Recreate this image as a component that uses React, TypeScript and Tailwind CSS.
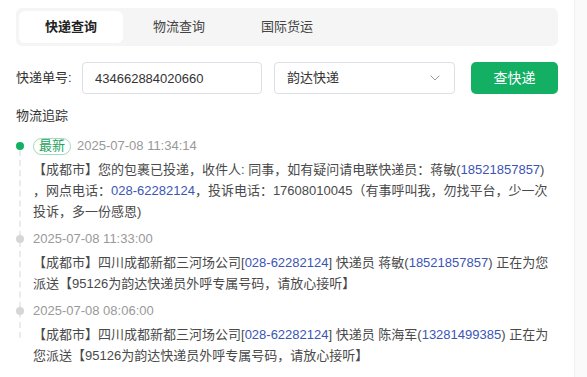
import React, { useState } from 'react';
import { ChevronDown } from 'lucide-react';

const tabs = ['快递查询', '物流查询', '国际货运'];

function Link({ children }: { children: React.ReactNode }) {
  return <span className="text-[#3b55b5]">{children}</span>;
}

export default function App() {
  const [active, setActive] = useState(0);
  const [trackNo, setTrackNo] = useState('434662884020660');

  return (
    <div
      className="flex h-[377px] w-full overflow-hidden bg-white text-[13px] text-[#333]"
      style={{ fontFamily: '"Liberation Sans", "Noto Sans CJK SC", sans-serif' }}
    >
      <div className="flex-1 px-4 pt-2">
        {/* Tabs */}
        <div className="flex h-[38px] w-[542px] gap-1 rounded-md bg-[#f5f5f5] p-[3px]">
          {tabs.map((t, i) => (
            <button
              key={t}
              onClick={() => setActive(i)}
              className={`h-full w-[104px] rounded-md text-[13px] ${
                active === i ? 'bg-white font-bold text-[#222]' : 'text-[#444]'
              }`}
            >
              {t}
            </button>
          ))}
        </div>

        {/* Search row */}
        <div className="mt-4 flex h-8 w-[542px] items-center">
          <span className="w-[66px] shrink-0 text-[#333]">快递单号:</span>
          <input
            value={trackNo}
            onChange={(e) => setTrackNo(e.target.value)}
            className="h-8 w-[180px] rounded border border-[#dcdfe6] px-3 text-[13px] text-[#333] outline-none"
          />
          <div className="ml-3 flex h-8 w-[181px] items-center justify-between rounded border border-[#dcdfe6] pl-3 pr-[11px] text-[#333]">
            <span>韵达快递</span>
            <ChevronDown className="h-4 w-4 text-[#999]" strokeWidth={1.5} />
          </div>
          <button className="ml-auto h-8 w-[87px] rounded-[5px] bg-[#13b063] text-sm text-white">
            查快递
          </button>
        </div>

        <div className="mt-3 leading-5 text-[#333]">物流追踪</div>

        {/* Timeline */}
        <div className="relative mt-[10px] w-[536px] pl-[17px]">
          <div className="absolute left-[3px] top-[14px] h-[188px] border-l-2 border-dashed border-[#ebebeb]" />

          <div className="relative">
            <span className="absolute -left-[17px] top-[6px] h-2 w-2 rounded-full bg-[#13b063]" />
            <div className="flex h-5 items-center gap-[6px]">
              <span className="flex h-[17px] items-center rounded-full border border-[#9fdcb8] px-[5px] text-[13px] text-[#22a35c]">
                最新
              </span>
              <span className="text-[#999]">2025-07-08 11:34:14</span>
            </div>
            <p className="mt-[3px] leading-[21px] text-[#4a4a4a]">
              【成都市】您的包裹已投递，收件人: 同事，如有疑问请电联快递员：蒋敏(<Link>18521857857</Link>)
              <br />
              ，网点电话：<Link>028-62282124</Link>，投诉电话：17608010045（有事呼叫我，勿找平台，少一次投诉，多一份感恩)
            </p>
          </div>

          <div className="relative mt-[7px]">
            <span className="absolute -left-[17px] top-[6px] h-2 w-2 rounded-full bg-[#d6d6d6]" />
            <div className="flex h-5 items-center text-[#999]">2025-07-08 11:33:00</div>
            <p className="mt-[3px] leading-[21px] text-[#4a4a4a]">
              【成都市】四川成都新都三河场公司[<Link>028-62282124</Link>] 快递员 蒋敏(<Link>18521857857</Link>) 正在为您派送【95126为韵达快递员外呼专属号码，请放心接听】
            </p>
          </div>

          <div className="relative mt-[7px]">
            <span className="absolute -left-[17px] top-[6px] h-2 w-2 rounded-full bg-[#d6d6d6]" />
            <div className="flex h-5 items-center text-[#999]">2025-07-08 08:06:00</div>
            <p className="mt-[3px] leading-[21px] text-[#4a4a4a]">
              【成都市】四川成都新都三河场公司[<Link>028-62282124</Link>] 快递员 陈海军(<Link>13281499385</Link>) 正在为您派送【95126为韵达快递员外呼专属号码，请放心接听】
            </p>
          </div>
        </div>
      </div>

      {/* scrollbar track */}
      <div className="w-[14px] shrink-0 border-l border-[#f0f0f0] bg-[#fafafa]" />
    </div>
  );
}
